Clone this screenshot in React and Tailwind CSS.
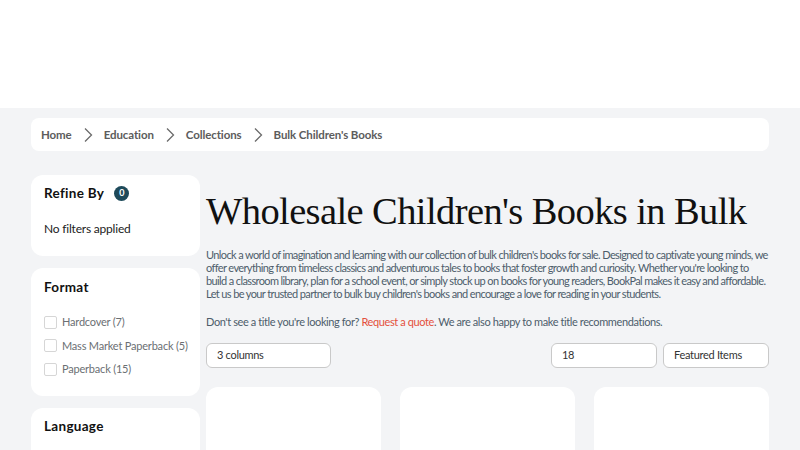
const crumbs = ['Home', 'Education', 'Collections', "Bulk Children's Books"];

const formats = [
  { label: 'Hardcover', count: 7 },
  { label: 'Mass Market Paperback', count: 5 },
  { label: 'Paperback', count: 15 },
];

function Chevron() {
  return (
    <svg width="10" height="16" viewBox="0 0 10 16" className="mx-[11px] text-[#6b6b6b]" fill="none">
      <path d="M2 1.5 L8.5 8 L2 14.5" stroke="currentColor" strokeWidth="1.3" />
    </svg>
  );
}

export default function App() {
  return (
    <div className="min-h-[450px] bg-[#f3f4f6] font-['Lato',sans-serif]">
      <header className="h-[108px] bg-white" />

      <div className="px-[31px] pt-[10px]">
        {/* breadcrumb */}
        <nav className="flex h-[33px] items-center rounded-lg bg-white px-[10px] text-[11.5px] font-bold tracking-[-0.1px] text-[#5c5c5c]">
          {crumbs.map((c, i) => (
            <div key={c} className="flex items-center">
              {i > 0 && <Chevron />}
              <span>{c}</span>
            </div>
          ))}
        </nav>

        <div className="mt-[24px] flex gap-[6px]">
          {/* sidebar */}
          <aside className="flex w-[169px] shrink-0 flex-col gap-[12px]">
            <div className="h-[81px] rounded-xl bg-white px-[13px] pt-[8px]">
              <div className="flex items-center gap-[10px]">
                <h3 className="text-[13.5px] font-bold tracking-[0.3px] text-[#111]">Refine By</h3>
                <span className="flex h-[15px] w-[15px] items-center justify-center rounded-full bg-[#1e4a5a] text-[9px] font-bold text-white">
                  0
                </span>
              </div>
              <p className="mt-[17px] text-[12px] tracking-[-0.2px] text-[#222]">No filters applied</p>
            </div>

            <div className="h-[128px] rounded-xl bg-white px-[13px] pt-[9px]">
              <h3 className="text-[13.5px] font-bold tracking-[0.3px] text-[#111]">Format</h3>
              <ul className="mt-[18px] flex flex-col gap-[9.5px]">
                {formats.map((f) => (
                  <li key={f.label} className="flex items-center gap-[5px] whitespace-nowrap text-[11px] leading-[14px] tracking-[-0.2px] text-[#6b6f73]">
                    <span className="h-[13px] w-[13px] shrink-0 rounded-[2px] border border-[#d6d6d6] bg-white" />
                    {f.label} ({f.count})
                  </li>
                ))}
              </ul>
            </div>

            <div className="h-[60px] rounded-xl bg-white px-[13px] pt-[8px]">
              <h3 className="text-[13.5px] font-bold tracking-[0.3px] text-[#111]">Language</h3>
            </div>
          </aside>

          {/* main */}
          <main className="min-w-0 flex-1">
            <h1 className="mt-[12px] font-['Liberation_Serif',serif] text-[38.5px] leading-[48px] tracking-[-0.6px] text-[#111]">
              Wholesale Children's Books in Bulk
            </h1>
            <p className="mt-[13px] text-[11px] leading-[13px] tracking-[-0.62px] text-[#4d5d6b]">
              Unlock a world of imagination and learning with our collection of bulk children's books for sale. Designed to captivate young minds, we offer everything from timeless classics and adventurous tales to books that foster growth and curiosity. Whether you're looking to build a classroom library, plan for a school event, or simply stock up on books for young readers, BookPal makes it easy and affordable. Let us be your trusted partner to bulk buy children's books and encourage a love for reading in your students.
            </p>
            <p className="mt-[15px] text-[11px] leading-[13px] tracking-[-0.4px] text-[#4d5d6b]">
              Don't see a title you're looking for? <span className="text-[#e4503c]">Request a quote</span>. We are also happy to make title recommendations.
            </p>

            <div className="mt-[15px] flex items-center text-[11px] tracking-[-0.3px] text-[#333]">
              <div className="flex h-[25px] w-[125px] items-center rounded-md border border-[#c9c9c9] bg-white px-[10px]">
                3 columns
              </div>
              <div className="ml-auto flex h-[25px] w-[106px] items-center rounded-md border border-[#c9c9c9] bg-white px-[10px]">
                18
              </div>
              <div className="ml-[6px] flex h-[25px] w-[106px] items-center rounded-md border border-[#c9c9c9] bg-white px-[10px]">
                Featured Items
              </div>
            </div>

            <div className="mt-[19px] grid grid-cols-3 gap-[19px]">
              {[0, 1, 2].map((n) => (
                <div key={n} className="h-[80px] rounded-xl bg-white" />
              ))}
            </div>
          </main>
        </div>
      </div>
    </div>
  );
}
